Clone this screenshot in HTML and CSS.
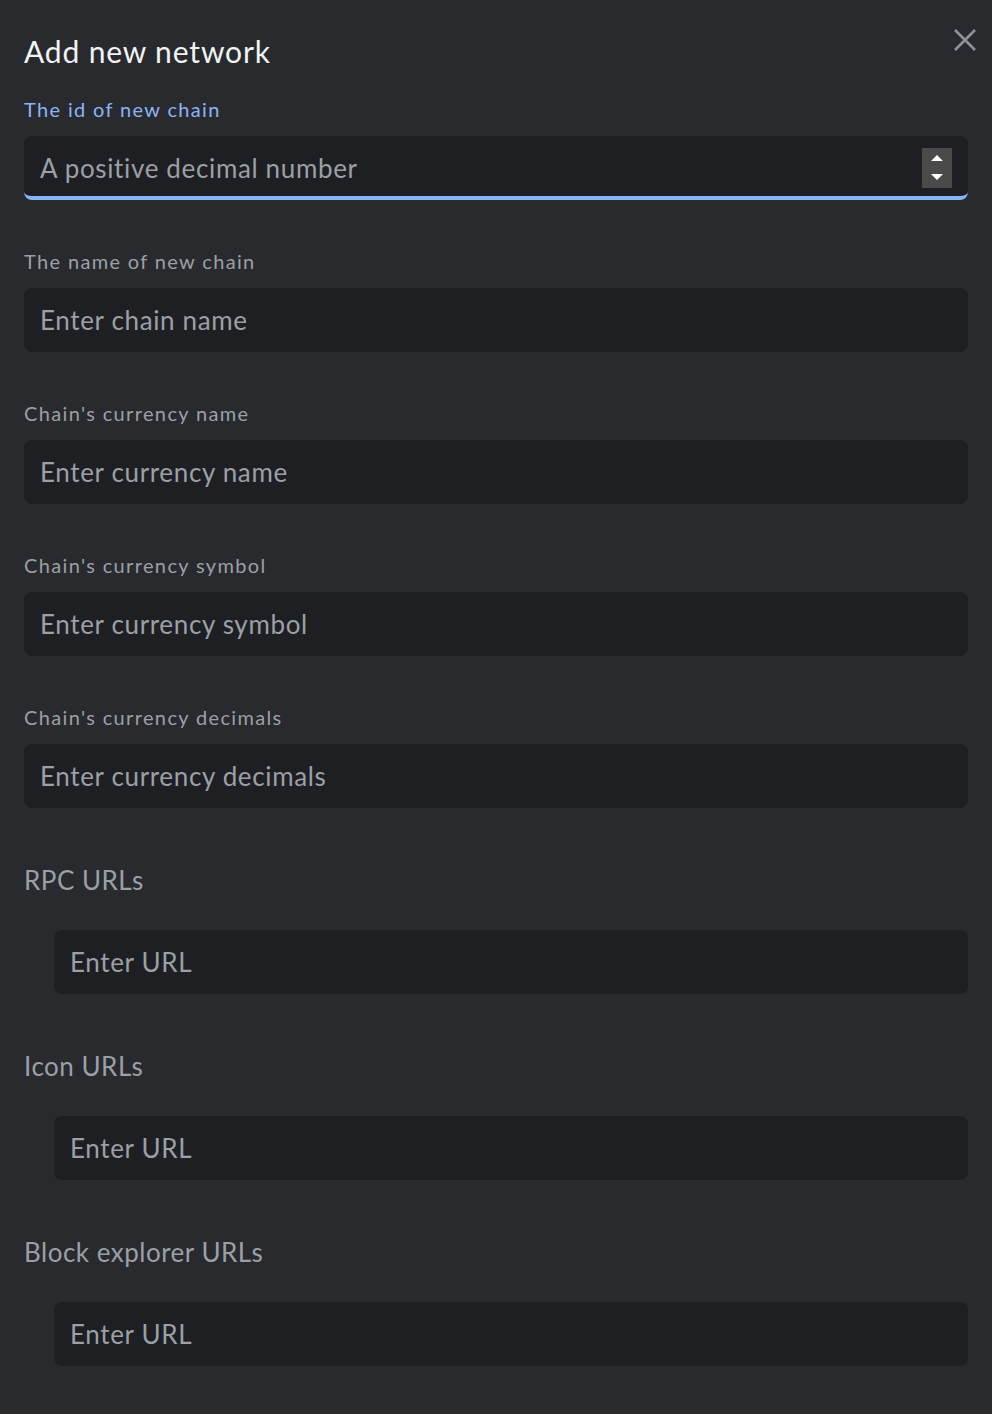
FILE: index.html
```html
<!DOCTYPE html>
<html lang="en">
<head>
<meta charset="utf-8">
<title>Add new network</title>
<link rel="stylesheet" href="styles.css">
</head>
<body>
<div class="dialog">
  <div class="header">
    <h1 class="title">Add new network</h1>
    <button class="close" aria-label="Close">
      <svg width="24" height="24" viewBox="0 0 24 24"><path d="M2 2 L22 22 M22 2 L2 22" stroke="#8e9196" stroke-width="2.6" fill="none"/></svg>
    </button>
  </div>

  <div class="field">
    <label class="label label-active">The id of new chain</label>
    <div class="input input-active">
      <span class="placeholder">A positive decimal number</span>
      <span class="spinner">
        <svg width="30" height="40" viewBox="0 0 30 40"><path d="M9 13 L15 7 L21 13 Z M9 26 L21 26 L15 32 Z" fill="#ffffff"/></svg>
      </span>
    </div>
  </div>

  <div class="field">
    <label class="label">The name of new chain</label>
    <div class="input"><span class="placeholder">Enter chain name</span></div>
  </div>

  <div class="field">
    <label class="label">Chain's currency name</label>
    <div class="input"><span class="placeholder">Enter currency name</span></div>
  </div>

  <div class="field">
    <label class="label">Chain's currency symbol</label>
    <div class="input"><span class="placeholder">Enter currency symbol</span></div>
  </div>

  <div class="field">
    <label class="label">Chain's currency decimals</label>
    <div class="input"><span class="placeholder">Enter currency decimals</span></div>
  </div>

  <div class="group">
    <h2 class="group-title">RPC URLs</h2>
    <div class="input input-nested"><span class="placeholder">Enter URL</span></div>
  </div>

  <div class="group">
    <h2 class="group-title">Icon URLs</h2>
    <div class="input input-nested"><span class="placeholder">Enter URL</span></div>
  </div>

  <div class="group">
    <h2 class="group-title">Block explorer URLs</h2>
    <div class="input input-nested"><span class="placeholder">Enter URL</span></div>
  </div>
</div>
</body>
</html>
```

FILE: styles.css
```css
html, body {
  margin: 0;
  padding: 0;
  background: #292a2e;
}
body {
  font-family: Lato, "Noto Sans", sans-serif;
  color: #9aa0a6;
  min-height: 1414px;
}
.dialog {
  padding: 31px 24px 40px 24px;
  display: flex;
  flex-direction: column;
}
.header {
  display: flex;
  justify-content: space-between;
  align-items: flex-start;
}
.title {
  margin: 0;
  font-size: 30px;
  line-height: 40px;
  font-weight: 400;
  letter-spacing: 0.85px;
  color: #f1f3f4;
}
.close {
  background: none;
  border: none;
  padding: 0;
  margin: -3px -9px 0 0;
  width: 24px;
  height: 24px;
  cursor: pointer;
}
.close svg { display: block; }
.field {
  display: flex;
  flex-direction: column;
  gap: 16px;
  margin-top: 27px;
}
.field + .field { margin-top: 50px; }
.label {
  font-size: 20px;
  line-height: 22px;
  letter-spacing: 1.35px;
  color: #9aa0a6;
}
.label-active { color: #8ab4f8; }
.input {
  position: relative;
  height: 64px;
  box-sizing: border-box;
  background: #1e1f22;
  border-radius: 8px;
  padding: 0 16px;
  display: flex;
  align-items: center;
  justify-content: space-between;
}
.input-active {
  border-bottom: 4px solid #8ab4f8;
  padding-top: 4px;
}
.placeholder {
  font-size: 26px;
  letter-spacing: 0.65px;
  color: #9aa0a6;
}
.spinner {
  display: block;
  width: 30px;
  height: 40px;
  background: #4a4a4b;
}
.spinner svg { display: block; }
.group {
  display: flex;
  flex-direction: column;
  gap: 34px;
  margin-top: 56px;
}
.group-title {
  margin: 0;
  font-size: 26px;
  line-height: 32px;
  font-weight: 400;
  letter-spacing: 0.5px;
  color: #9aa0a6;
}
.input-nested {
  margin-left: 30px;
}
```
